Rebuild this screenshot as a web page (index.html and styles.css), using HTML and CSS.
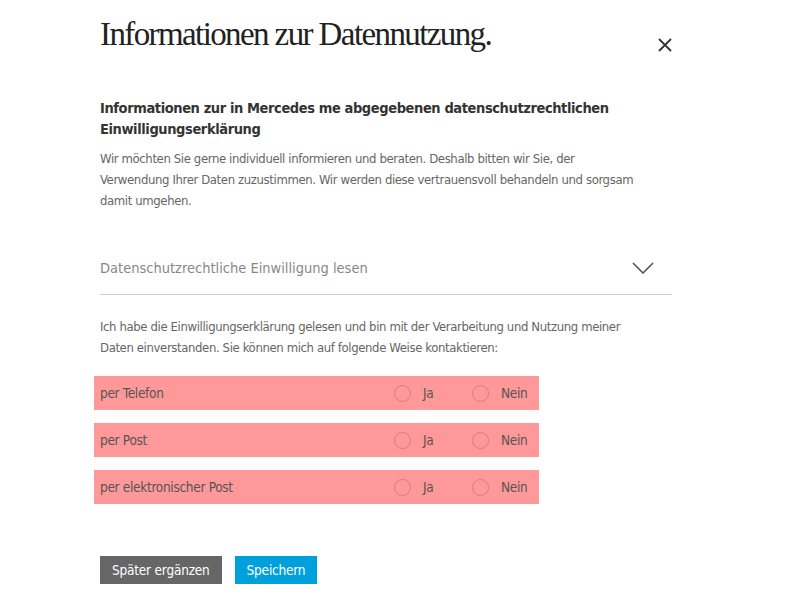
FILE: index.html
```html
<!DOCTYPE html>
<html lang="de">
<head>
<meta charset="utf-8">
<title>Informationen zur Datennutzung</title>
<link rel="stylesheet" href="styles.css">
</head>
<body>
<div class="modal">
  <header class="head">
    <h1 class="title">Informationen zur Datennutzung.</h1>
    <button class="close" aria-label="Schließen">
      <svg width="14" height="14" viewBox="0 0 14 14"><path d="M1 1L13 13M13 1L1 13" stroke="#333" stroke-width="1.8" fill="none"/></svg>
    </button>
  </header>
  <h2 class="subtitle">Informationen zur in Mercedes me abgegebenen datenschutzrechtlichen<br>Einwilligungserklärung</h2>
  <p class="text">Wir möchten Sie gerne individuell informieren und beraten. Deshalb bitten wir Sie, der<br>Verwendung Ihrer Daten zuzustimmen. Wir werden diese vertrauensvoll behandeln und sorgsam<br>damit umgehen.</p>
  <div class="accordion">
    <span>Datenschutzrechtliche Einwilligung lesen</span>
    <svg width="22" height="12" viewBox="0 0 22 12"><path d="M1 1L11 11L21 1" stroke="#555" stroke-width="1.6" fill="none"/></svg>
  </div>
  <p class="text consent">Ich habe die Einwilligungserklärung gelesen und bin mit der Verarbeitung und Nutzung meiner<br>Daten einverstanden. Sie können mich auf folgende Weise kontaktieren:</p>
  <div class="rows">
    <div class="row"><span class="label">per Telefon</span><label class="opt"><span class="radio"></span>Ja</label><label class="opt"><span class="radio"></span>Nein</label></div>
    <div class="row"><span class="label">per Post</span><label class="opt"><span class="radio"></span>Ja</label><label class="opt"><span class="radio"></span>Nein</label></div>
    <div class="row"><span class="label">per elektronischer Post</span><label class="opt"><span class="radio"></span>Ja</label><label class="opt"><span class="radio"></span>Nein</label></div>
  </div>
  <div class="actions">
    <button class="btn btn-later">Später ergänzen</button>
    <button class="btn btn-save">Speichern</button>
  </div>
</div>
</body>
</html>
```
FILE: styles.css
```css
html, body { margin: 0; padding: 0; background: #fff; }
body { font-family: "DejaVu Sans Condensed", "DejaVu Sans", sans-serif; font-stretch: condensed; color: #333; }
.modal { width: 572px; padding: 14px 0 0 100px; }
.head { display: flex; justify-content: space-between; align-items: flex-start; height: 84px; }
.title { margin: 0; font-family: "Liberation Serif", "Times New Roman", serif; font-weight: normal; font-size: 33px; line-height: 40px; color: #222; letter-spacing: -1.6px; }
.close { border: 0; background: none; padding: 0; margin: 24px 0 0 0; width: 14px; height: 14px; display: flex; }
.subtitle { margin: 0 0 8px; font-size: 14.5px; line-height: 21px; font-weight: bold; color: #333; letter-spacing: -0.4px; }
.text { margin: 0; font-size: 13px; line-height: 21px; color: #666; letter-spacing: -0.38px; }
.accordion { display: flex; justify-content: space-between; align-items: center; margin-top: 37px; height: 39px; padding-bottom: 7px; border-bottom: 1px solid #d0d0d0; font-size: 14.5px; color: #888; padding-right: 18px; letter-spacing: 0; }
.consent { margin-top: 21px; }
.rows { display: flex; flex-direction: column; gap: 13px; margin: 18px 0 0 -6px; width: 445px; }
.row { display: flex; align-items: center; height: 34px; background: #ff9999; font-size: 13.5px; color: #555; padding-left: 6px; letter-spacing: -0.3px; }
.label { flex: 1; }
.opt { display: flex; align-items: center; gap: 12px; }
.opt:first-of-type { width: 78px; }
.opt + .opt { width: 67px; }
.radio { width: 17px; height: 17px; border: 1px solid #e07a7a; border-radius: 50%; box-sizing: border-box; }
.actions { display: flex; gap: 13px; margin-top: 52px; }
.btn { border: 0; height: 28px; padding: 0 12px; font-family: inherit; font-stretch: condensed; font-size: 13.5px; letter-spacing: -0.2px; color: #fff; }
.btn-later { background: #666; }
.btn-save { background: #00a0dc; }
```
